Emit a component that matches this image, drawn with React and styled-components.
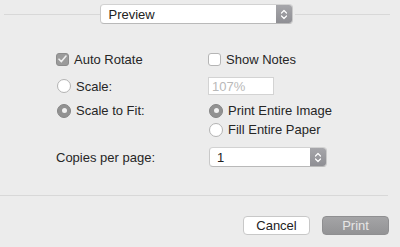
import React from "react";
import styled, { createGlobalStyle } from "styled-components";

const Global = createGlobalStyle`
  html, body { margin: 0; padding: 0; background: #ececec; }
  body { font-family: "Liberation Sans", Arial, sans-serif; font-size: 13px; color: #262626; }
`;

const Page = styled.div`
  width: 400px;
  height: 247px;
  background: #ececec;
  display: flex;
  flex-direction: column;
  overflow: hidden;
`;

const Header = styled.div`
  display: flex;
  align-items: center;
  padding: 4px 10px 0 4px;
  height: 20px;
`;

const Rule = styled.div`
  flex: 1;
  height: 1px;
  background: #d8d8d8;
  margin: ${(p) => p.$m || "0"};
`;

const Separator = styled.div`
  width: 388px;
  height: 1px;
  background: #d8d8d8;
`;

const Popup = styled.div`
  width: ${(p) => p.$w}px;
  height: ${(p) => p.$h}px;
  box-sizing: border-box;
  display: flex;
  align-items: stretch;
  background: #fff;
  border: 1px solid #c9c9c9;
  border-top-color: #d2d2d2;
  border-bottom-color: #b9b9b9;
  border-radius: 4px;
  overflow: hidden;
`;

const PopupText = styled.div`
  flex: 1;
  display: flex;
  align-items: center;
  padding-left: ${(p) => p.$pl}px;
  font-size: 13px;
  color: #222;
`;

const Stepper = styled.div`
  width: 16px;
  display: flex;
  align-items: center;
  justify-content: center;
  background: linear-gradient(#a6a6aa, #8f8f94);
`;

const Chevrons = () => (
  <svg width="8" height="11" viewBox="0 0 8 11">
    <path d="M1.5 4 L4 1.5 L6.5 4 M1.5 7 L4 9.5 L6.5 7" fill="none" stroke="#fff" strokeWidth="1.2" strokeLinecap="round" strokeLinejoin="round" />
  </svg>
);

const Options = styled.div`
  display: grid;
  grid-template-columns: 152px 1fr;
  grid-template-rows: 22px 32px 17px 21px 34px;
  align-items: center;
  padding-left: 56px;
  margin-top: 24px;
`;

const Item = styled.div`
  display: flex;
  align-items: center;
  gap: ${(p) => p.$gap ?? 5}px;
  grid-column: ${(p) => p.$col || "auto"};
  grid-row: ${(p) => p.$row || "auto"};
  margin-left: ${(p) => p.$ml || 0}px;
  white-space: nowrap;
`;

const Box = styled.span`
  width: 13px;
  height: 13px;
  box-sizing: border-box;
  border-radius: 3px;
  display: flex;
  align-items: center;
  justify-content: center;
  background: ${(p) => (p.$on ? "#9b9b9b" : "#fff")};
  border: 1px solid ${(p) => (p.$on ? "#8c8c8c" : "#b5b5b5")};
`;

const Radio = styled.span`
  width: 14px;
  height: 14px;
  box-sizing: border-box;
  border-radius: 50%;
  display: flex;
  align-items: center;
  justify-content: center;
  background: ${(p) => (p.$on ? "#929292" : "#fff")};
  border: 1px solid ${(p) => (p.$on ? "#858585" : "#b3b3b3")};
  &::after {
    content: "";
    display: ${(p) => (p.$on ? "block" : "none")};
    width: 5px;
    height: 5px;
    border-radius: 50%;
    background: #f2f2f2;
  }
`;

const Field = styled.div`
  width: 66px;
  height: 18px;
  box-sizing: border-box;
  background: #fff;
  border: 1px solid #d3d3d3;
  display: flex;
  align-items: center;
  padding-left: 3px;
  color: #b9b9b9;
  font-size: 13px;
`;

const Footer = styled.div`
  margin-top: 21px;
  display: flex;
  flex-direction: column;
`;

const Buttons = styled.div`
  display: flex;
  justify-content: flex-end;
  gap: 12px;
  padding-right: 11px;
  margin-top: 20px;
`;

const Button = styled.div`
  width: 67px;
  height: 19px;
  box-sizing: border-box;
  border-radius: 4px;
  display: flex;
  align-items: center;
  justify-content: center;
  font-size: 13px;
  color: ${(p) => (p.$primary ? "#e6e6e6" : "#222")};
  background: ${(p) => (p.$primary ? "linear-gradient(#a4a4a6, #939395)" : "#fff")};
  border: 1px solid ${(p) => (p.$primary ? "#8f8f91" : "#c8c8c8")};
`;

export default function App() {
  return (
    <Page>
      <Global />
      <Header>
        <Rule />
        <Popup $w={193} $h={20}>
          <PopupText $pl={8}>Preview</PopupText>
          <Stepper><Chevrons /></Stepper>
        </Popup>
        <Rule $m="0 0 0 2px" />
      </Header>
      <Options>
        <Item $row="1">
          <Box $on>
            <svg width="9" height="8" viewBox="0 0 9 8">
              <path d="M1 4.2 L3.4 6.6 L8 1" fill="none" stroke="#eeeeee" strokeWidth="1.6" strokeLinecap="round" strokeLinejoin="round" />
            </svg>
          </Box>
          Auto Rotate
        </Item>
        <Item $row="1">
          <Box />
          Show Notes
        </Item>
        <Item $row="2" $ml={1}>
          <Radio />
          Scale:
        </Item>
        <Item $row="2">
          <Field>107%</Field>
        </Item>
        <Item $row="3" $ml={1}>
          <Radio $on />
          Scale to Fit:
        </Item>
        <Item $row="3" $col="2" $ml={1}>
          <Radio $on />
          Print Entire Image
        </Item>
        <Item $row="4" $col="2" $ml={1}>
          <Radio />
          Fill Entire Paper
        </Item>
        <Item $row="5">Copies per page:</Item>
        <Item $row="5" $ml={1}>
          <Popup $w={118} $h={20}>
            <PopupText $pl={7}>1</PopupText>
            <Stepper><Chevrons /></Stepper>
          </Popup>
        </Item>
      </Options>
      <Footer>
        <Separator />
        <Buttons>
          <Button>Cancel</Button>
          <Button $primary>Print</Button>
        </Buttons>
      </Footer>
    </Page>
  );
}
